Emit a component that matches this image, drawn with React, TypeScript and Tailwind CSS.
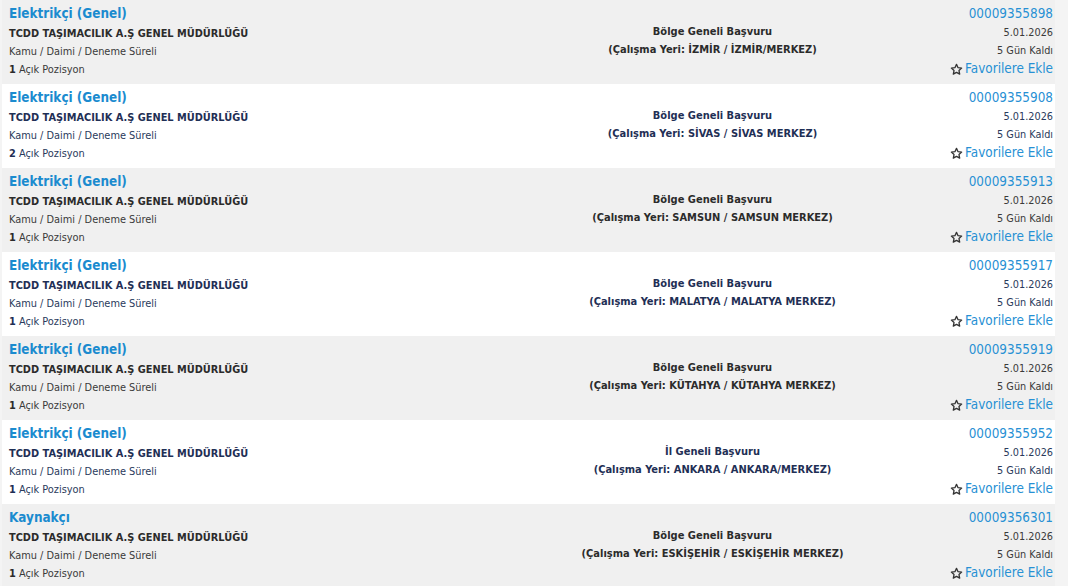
import React from "react";

type Row = {
  title: string;
  count: number;
  basvuru: string;
  yer: string;
  no: string;
};

const rows: Row[] = [
  { title: "Elektrikçi (Genel)", count: 1, basvuru: "Bölge Geneli Başvuru", yer: "(Çalışma Yeri: İZMİR / İZMİR/MERKEZ)", no: "00009355898" },
  { title: "Elektrikçi (Genel)", count: 2, basvuru: "Bölge Geneli Başvuru", yer: "(Çalışma Yeri: SİVAS / SİVAS MERKEZ)", no: "00009355908" },
  { title: "Elektrikçi (Genel)", count: 1, basvuru: "Bölge Geneli Başvuru", yer: "(Çalışma Yeri: SAMSUN / SAMSUN MERKEZ)", no: "00009355913" },
  { title: "Elektrikçi (Genel)", count: 1, basvuru: "Bölge Geneli Başvuru", yer: "(Çalışma Yeri: MALATYA / MALATYA MERKEZ)", no: "00009355917" },
  { title: "Elektrikçi (Genel)", count: 1, basvuru: "Bölge Geneli Başvuru", yer: "(Çalışma Yeri: KÜTAHYA / KÜTAHYA MERKEZ)", no: "00009355919" },
  { title: "Elektrikçi (Genel)", count: 1, basvuru: "İl Geneli Başvuru", yer: "(Çalışma Yeri: ANKARA / ANKARA/MERKEZ)", no: "00009355952" },
  { title: "Kaynakçı", count: 1, basvuru: "Bölge Geneli Başvuru", yer: "(Çalışma Yeri: ESKİŞEHİR / ESKİŞEHİR MERKEZ)", no: "00009356301" },
];

function Star() {
  return (
    <svg width="13" height="13" viewBox="0 0 24 24" fill="none" stroke="#333" strokeWidth="2.4" strokeLinejoin="round">
      <path d="M12 2.5l2.9 6.1 6.6.8-4.9 4.6 1.3 6.6L12 17.3l-5.9 3.3 1.3-6.6-4.9-4.6 6.6-.8z" />
    </svg>
  );
}

export default function App() {
  return (
    <div
      className="w-[1068px] h-[586px] overflow-hidden bg-[#f4f4f4] flex flex-col pl-[2px]"
      style={{ fontFamily: '"DejaVu Sans Condensed", "DejaVu Sans", sans-serif' }}
    >
      {rows.map((r, i) => {
        const gray = i % 2 === 0;
        const dark = gray ? "text-[#2b2b2b]" : "text-[#1f2f55]";
        const soft = gray ? "text-[#3a3a3a]" : "text-[#2a3a5c]";
        return (
          <div
            key={i}
            className={`w-[1053px] h-[84px] shrink-0 flex ${gray ? "bg-[#f0f0f0]" : "bg-white"}`}
          >
            <div className="w-[562px] pl-[7px] pt-[2px] flex flex-col">
              <div className="text-[13.4px] leading-[23px] font-bold text-[#1b8bcf]">{r.title}</div>
              <div className={`text-[10.9px] leading-[18px] font-bold ${dark}`}>TCDD TAŞIMACILIK A.Ş GENEL MÜDÜRLÜĞÜ</div>
              <div className={`text-[10.9px] leading-[18px] ${soft}`}>Kamu / Daimi / Deneme Süreli</div>
              <div className={`text-[10.9px] leading-[18px] ${soft}`}>
                <span className={`font-bold ${dark}`}>{r.count}</span> Açık Pozisyon
              </div>
            </div>
            <div className={`flex-1 pt-[23px] flex flex-col items-center text-[11px] leading-[18px] font-bold ${dark}`}>
              <div>{r.basvuru}</div>
              <div>{r.yer}</div>
            </div>
            <div className="w-[194px] pr-[2px] pt-[4px] flex flex-col items-end">
              <div className="text-[13.4px] leading-[20px] text-[#2790d4]">{r.no}</div>
              <div className={`text-[10.8px] leading-[18px] ${soft}`}>5.01.2026</div>
              <div className={`text-[10.8px] leading-[18px] ${soft}`}>5 Gün Kaldı</div>
              <div className="flex items-center gap-[2px] text-[13.4px] leading-[18px] text-[#2790d4]">
                <Star />
                <span>Favorilere Ekle</span>
              </div>
            </div>
          </div>
        );
      })}
    </div>
  );
}
